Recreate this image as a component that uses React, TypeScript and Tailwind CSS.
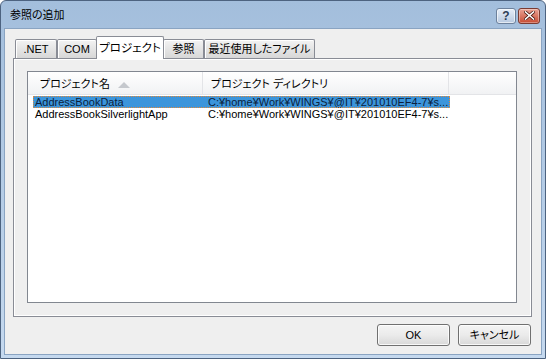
const jp = "font-['Liberation_Sans','Noto_Sans_CJK_JP',sans-serif] [font-feature-settings:'palt']"

type Tab = { label: string; width: string; selected?: boolean }

const tabs: Tab[] = [
  { label: ".NET", width: "w-[42px]" },
  { label: "COM", width: "w-[40px]" },
  { label: "プロジェクト", width: "w-[68px]", selected: true },
  { label: "参照", width: "w-[41px]" },
  { label: "最近使用したファイル", width: "w-[111px]" },
]

const rows = [
  { name: "AddressBookData", dir: "C:¥home¥Work¥WINGS¥@IT¥201010EF4-7¥s...", selected: true },
  { name: "AddressBookSilverlightApp", dir: "C:¥home¥Work¥WINGS¥@IT¥201010EF4-7¥s..." },
]

function TitleButton({ kind }: { kind: "help" | "close" }) {
  if (kind === "help") {
    return (
      <div className="w-[20px] h-[16px] rounded-[3px] border border-[#6d819c] bg-gradient-to-b from-[#e6eef8] to-[#b7c9e0] flex items-center justify-center shadow-[inset_0_0_0_1px_rgba(255,255,255,0.6)]">
        <span className="text-[12px] font-bold leading-none text-[#2c3e57] font-['Liberation_Sans',sans-serif]">?</span>
      </div>
    )
  }
  return (
    <div className="w-[22px] h-[16px] rounded-[3px] border border-[#7a3b32] bg-gradient-to-b from-[#e9a193] to-[#c64a32] flex items-center justify-center shadow-[inset_0_0_0_1px_rgba(255,255,255,0.35)]">
      <svg width="11" height="9" viewBox="0 0 11 9">
        <path d="M1.5 1 L9.5 8 M9.5 1 L1.5 8" stroke="#4a1a12" strokeWidth="3" strokeLinecap="square" />
        <path d="M1.5 1 L9.5 8 M9.5 1 L1.5 8" stroke="#ffffff" strokeWidth="1.6" strokeLinecap="square" />
      </svg>
    </div>
  )
}

function DialogButton({ label }: { label: string }) {
  return (
    <button
      type="button"
      className={`w-[73px] h-[22px] rounded-[3px] border border-[#707070] bg-gradient-to-b from-[#f4f4f4] via-[#ebebeb] to-[#d8d8d8] shadow-[inset_0_0_0_1px_rgba(255,255,255,0.8)] text-[11px] text-black ${jp}`}
    >
      {label}
    </button>
  )
}

export default function App() {
  return (
    <div className={`w-[546px] h-[359px] flex flex-col rounded-t-[6px] border border-[#4d6380] bg-gradient-to-b from-[#a3bedc] to-[#c5d9ef] ${jp}`}>
      {/* title bar */}
      <div className="h-[27px] shrink-0 flex items-center pl-[9px] pr-[5px]">
        <span className="text-[11px] text-black flex-1 pt-[1px]">参照の追加</span>
        <div className="flex gap-[2px] mt-[2px]">
          <TitleButton kind="help" />
          <TitleButton kind="close" />
        </div>
      </div>

      {/* client area */}
      <div className="flex-1 mx-[3px] mb-[3px] border border-[#8aa4c2] bg-[#efefef] flex flex-col pl-[8px] pr-[9px] pt-[7px]">
        {/* tab strip */}
        <div className="flex items-end h-[23px] pl-[2px] relative z-10">
          {tabs.map((t) =>
            t.selected ? (
              <div
                key={t.label}
                className={`${t.width} h-[23px] -mx-[1px] border border-b-0 border-[#898c95] bg-white rounded-t-[2px] flex items-start justify-center pt-[3px] text-[11.5px] whitespace-nowrap text-black`}
              >
                {t.label}
              </div>
            ) : (
              <div
                key={t.label}
                className={`${t.width} h-[19px] mb-[1px] border border-b-0 border-[#898c95] rounded-t-[2px] bg-gradient-to-b from-[#f3f3f3] to-[#d7d7d7] shadow-[inset_1px_1px_0_0_#ffffff] flex items-center justify-center text-[11px] whitespace-nowrap text-black`}
              >
                {t.label}
              </div>
            )
          )}
        </div>

        {/* tab panel */}
        <div className="w-[519px] h-[259px] -mt-[1px] border border-[#898c95] shadow-[inset_0_0_0_1px_#ffffff] bg-[#efefef] pl-[13px] pt-[12px]">
          {/* list view */}
          <div className="w-[490px] h-[232px] border border-[#828790] bg-white flex flex-col">
            <div className="h-[23px] flex bg-gradient-to-b from-white to-[#f1f2f4] border-b border-[#e3e4e7] text-[11px] text-black">
              <div className="w-[175px] border-r border-[#e3e4e7] flex items-center pt-[3px] pl-[12px] gap-[8px]">
                <span>プロジェクト名</span>
                <svg width="12" height="6" viewBox="0 0 12 6">
                  <path d="M0 6 L6 0 L12 6 Z" fill="#c5c8cd" />
                </svg>
              </div>
              <div className="w-[246px] border-r border-[#e3e4e7] flex items-center pt-[3px] pl-[8px]">
                プロジェクト ディレクトリ
              </div>
              <div className="flex-1" />
            </div>

            <div className="pt-[1px] pl-[5px] text-[11px] font-['Liberation_Sans',sans-serif]">
              {rows.map((r) => (
                <div
                  key={r.name}
                  className={`w-[417px] h-[12px] flex items-center leading-none ${
                    r.selected
                      ? "bg-[#3c95db] outline outline-1 outline-dotted outline-[#e08a3c] -outline-offset-1 text-[#0c1f3d]"
                      : "text-black"
                  }`}
                >
                  <span className="w-[173px] pl-[2px] whitespace-nowrap overflow-hidden">{r.name}</span>
                  <span className="pl-[2px] whitespace-nowrap">{r.dir}</span>
                </div>
              ))}
            </div>
          </div>
        </div>

        {/* buttons */}
        <div className="flex justify-end gap-[8px] mt-[7px] pr-[1px]">
          <DialogButton label="OK" />
          <DialogButton label="キャンセル" />
        </div>
      </div>
    </div>
  )
}
